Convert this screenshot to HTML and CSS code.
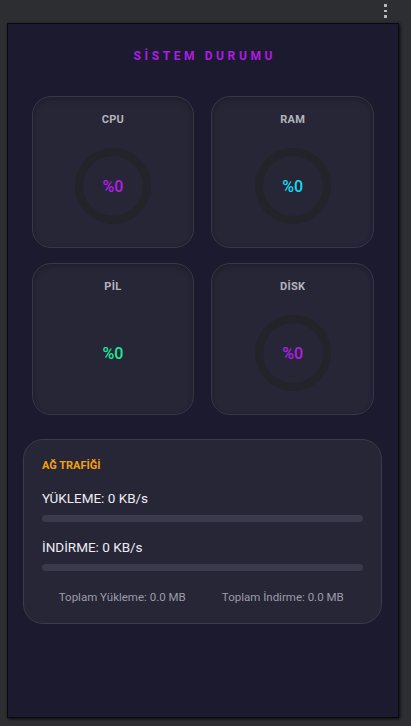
FILE: index.html
```html
<!DOCTYPE html>
<html lang="tr">
<head>
<meta charset="utf-8">
<title>Sistem Durumu</title>
<link rel="stylesheet" href="styles.css">
</head>
<body>
<div class="menu-dots"><span></span><span></span><span></span></div>
<main class="frame">
  <h1 class="title">SİSTEM DURUMU</h1>
  <section class="grid">
    <div class="card">
      <div class="label">CPU</div>
      <div class="ring"><span class="value purple">%0</span></div>
    </div>
    <div class="card">
      <div class="label">RAM</div>
      <div class="ring"><span class="value cyan">%0</span></div>
    </div>
    <div class="card">
      <div class="label">PİL</div>
      <div class="ring ring-none"><span class="value green">%0</span></div>
    </div>
    <div class="card">
      <div class="label">DİSK</div>
      <div class="ring"><span class="value purple">%0</span></div>
    </div>
  </section>
  <section class="net">
    <div class="net-title">AĞ TRAFİĞİ</div>
    <div class="net-line">YÜKLEME: 0 KB/s</div>
    <div class="bar"></div>
    <div class="net-line">İNDİRME: 0 KB/s</div>
    <div class="bar"></div>
    <div class="totals">
      <span>Toplam Yükleme: 0.0 MB</span>
      <span>Toplam İndirme: 0.0 MB</span>
    </div>
  </section>
</main>
</body>
</html>
```

FILE: styles.css
```css
html, body {
  margin: 0;
  padding: 0;
}
body {
  background: #2d2e32;
  font-family: Roboto, "Noto Sans", "Liberation Sans", sans-serif;
  width: 411px;
  height: 726px;
  overflow: hidden;
  padding: 23px 0 0 7px;
  box-sizing: border-box;
  position: relative;
}
.menu-dots {
  position: absolute;
  top: 4px;
  left: 384px;
  display: flex;
  flex-direction: column;
  gap: 3px;
}
.menu-dots span {
  display: block;
  width: 2.5px;
  height: 2.5px;
  background: #b8b8bc;
}
.frame {
  width: 392px;
  height: 695px;
  box-sizing: border-box;
  background: #1b1a2e;
  border: 1px solid #0a0a0e;
  box-shadow: 1px 1px 3px rgba(0,0,0,0.8);
  padding-top: 24px;
}
.title {
  margin: 0;
  text-align: center;
  font-size: 12px;
  line-height: 16px;
  font-weight: 700;
  letter-spacing: 3.6px;
  padding-left: 3.6px;
  color: #b01ae6;
}
.grid {
  margin-top: 32px;
  padding: 0 24px 0 23.5px;
  display: grid;
  grid-template-columns: 1fr 1fr;
  column-gap: 17px;
  row-gap: 15px;
}
.card {
  height: 152px;
  box-sizing: border-box;
  background: #262637;
  border: 1px solid #383747;
  border-radius: 19px;
  box-shadow: inset 0 4px 5px rgba(0,0,0,0.12), inset 0 0 4px rgba(0,0,0,0.15);
  display: flex;
  flex-direction: column;
  align-items: center;
  padding-top: 16px;
}
.label {
  font-size: 11px;
  line-height: 13px;
  font-weight: 700;
  color: #b4b4bc;
  letter-spacing: 0.3px;
}
.ring {
  margin-top: 22px;
  width: 76px;
  height: 76px;
  box-sizing: border-box;
  border: 8px solid #232329;
  border-radius: 50%;
  display: flex;
  align-items: center;
  justify-content: center;
}
.ring-none {
  border-color: transparent;
}
.value {
  font-size: 16px;
  font-weight: 500;
}
.purple { color: #b21ee8; }
.cyan { color: #18d8ef; }
.green { color: #1ee89a; }
.net {
  margin: 24px 16px 0 15px;
  height: 185px;
  box-sizing: border-box;
  background: #262637;
  border: 1px solid #3a3a4b;
  border-radius: 20px;
  padding: 19px 18px 0 18px;
}
.net-title {
  font-size: 11px;
  line-height: 14px;
  font-weight: 700;
  color: #f5a00e;
}
.net-line {
  margin-top: 17px;
  font-size: 13.5px;
  line-height: 16px;
  color: #ececf0;
}
.bar {
  margin-top: 9px;
  height: 7px;
  border-radius: 4px;
  background: #3b3a4c;
}
.totals {
  margin-top: 20px;
  display: flex;
  font-size: 11.5px;
  line-height: 13px;
  color: #9c9ca8;
}
.totals span {
  flex: 1;
  text-align: center;
}
```
